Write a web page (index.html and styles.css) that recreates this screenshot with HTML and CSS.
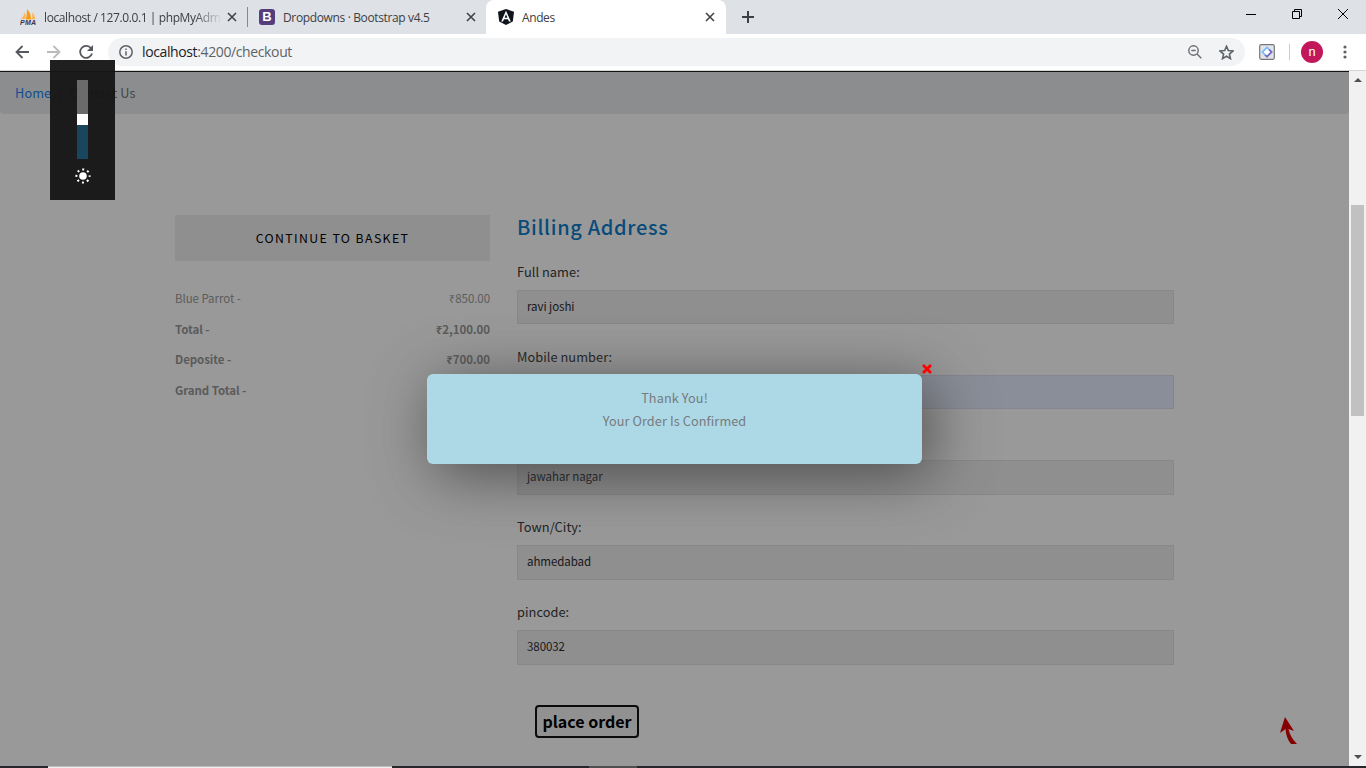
FILE: index.html
```html
<!DOCTYPE html>
<html lang="en">
<head>
<meta charset="utf-8">
<title>Andes</title>
<link rel="stylesheet" href="styles.css">
</head>
<body>
<header class="tabs">
  <div class="tab tab-pma">
    <svg class="favicon" viewBox="0 0 16 16"><path d="M1 10 Q4 7 5 3 Q6 7 5.500 10Z" fill="#fbb45c"/><path d="M6 10.500Q7 5 7 0Q11 4 11 10.500Z" fill="#f89c0e"/><path d="M11.500 10.500Q13 7 12 3Q15 6 15.500 10Z" fill="#fbb45c"/><text x="0" y="16" class="pma" textLength="16">PMA</text></svg>
    <span class="tab-title fade t1">localhost / 127.0.0.1 | phpMyAdm</span>
    <svg class="x" viewBox="0 0 10 10"><path d="M1 1 9 9M9 1 1 9"/></svg>
  </div>
  <div class="tab tab-boot">
    <span class="boot">B</span>
    <span class="tab-title t2">Dropdowns · Bootstrap v4.5</span>
    <svg class="x" viewBox="0 0 10 10"><path d="M1 1 9 9M9 1 1 9"/></svg>
  </div>
  <div class="tab tab-andes">
    <svg class="favicon" viewBox="0 0 16 16"><path d="M8 0 16 2.700 14.800 12.500 8 16 1.200 12.500 0 2.700Z" fill="#10141c"/><path d="M8 1.800 3.200 12.600H5L6 10.200H10L11 12.600H12.800ZM8 5.200 9.400 8.700H6.600Z" fill="#fff" fill-rule="evenodd"/></svg>
    <span class="tab-title t3">Andes</span>
    <svg class="x" viewBox="0 0 10 10"><path d="M1 1 9 9M9 1 1 9"/></svg>
  </div>
  <svg class="plus" viewBox="0 0 12 12"><path d="M6 0V12M0 6H12"/></svg>
  <div class="window-buttons">
    <svg width="10" height="10"><path d="M0 5.500H10"/></svg>
    <svg width="10" height="10"><path d="M.5 2.500H7.500V9.500H.5ZM2.500 2.500V.5H9.500V7.500H7.500"/></svg>
    <svg width="10" height="10"><path d="M0 0 10 10M10 0 0 10"/></svg>
  </div>
</header>
<nav class="toolbar">
  <svg class="nav-icon" viewBox="0 0 14 14"><path d="M14 7H1.500M7.500 1 1.500 7 7.500 13"/></svg>
  <svg class="nav-icon off" viewBox="0 0 14 14"><path d="M0 7H12.500M6.500 1 12.500 7 6.500 13"/></svg>
  <svg class="nav-icon" viewBox="0 0 14 14"><path d="M12 3.300A6 6 0 1 0 13 8.500"/><path d="M14 0V6H8Z" class="solid"/></svg>
  <div class="omnibox">
    <svg class="info" viewBox="0 0 14 14"><circle cx="7" cy="7" r="6.200"/><path d="M7 6.200V10.500M7 3.500V5"/></svg>
    <span class="url"><b>localhost</b>:4200/checkout</span>
    <svg class="search" viewBox="0 0 14 14"><circle cx="5.500" cy="5.500" r="4.700"/><path d="M9 9 13.300 13.300M3.300 5.500H7.700"/></svg>
    <svg class="star" viewBox="0 0 14 14"><path d="M7 1.200 8.700 5.200 13 5.600 9.700 8.500 10.700 12.700 7 10.500 3.300 12.700 4.300 8.500 1 5.600 5.300 5.200Z"/></svg>
  </div>
  <svg class="extension" viewBox="0 0 16 16"><rect x=".7" y=".7" width="14.600" height="14.600" rx="1.500" fill="#e4e4e7" stroke="#77777b" stroke-width="1.200"/><path d="M8 1.800 14.200 8 8 14.200 1.800 8Z" fill="#fff"/><path d="M6 10.800 3.300 8 8 3.300 10 5.300" fill="none" stroke="#7abbfb" stroke-width="1.800"/><path d="M10 5.300 12.700 8 8 12.700 6 10.800" fill="none" stroke="#706bc4" stroke-width="1.800"/></svg>
  <i class="divider"></i>
  <span class="avatar">n</span>
  <svg class="dots" viewBox="0 0 4 14"><circle cx="2" cy="2" r="1.600"/><circle cx="2" cy="7" r="1.600"/><circle cx="2" cy="12" r="1.600"/></svg>
</nav>
<div class="viewport">
  <div class="page">
    <div class="breadcrumb"><a>Home</a><span class="slash">/</span><span class="contact">Contact Us</span></div>
    <main class="checkout">
      <aside class="summary">
        <button class="basket"><span>CONTINUE TO BASKET</span></button>
        <div class="line regular"><span>Blue Parrot -</span><span>₹850.00</span></div>
        <div class="line"><span>Total -</span><span>₹2,100.00</span></div>
        <div class="line"><span>Deposite -</span><span>₹700.00</span></div>
        <div class="line"><span>Grand Total -</span></div>
      </aside>
      <form class="billing">
        <h2><span>Billing Address</span></h2>
        <label>Full name:</label><div class="field">ravi joshi</div>
        <label>Mobile number:</label><div class="field autofill"></div>
        <label></label><div class="field">jawahar nagar</div>
        <label>Town/City:</label><div class="field">ahmedabad</div>
        <label>pincode:</label><div class="field">380032</div>
        <button class="order" type="button"><span>place order</span></button>
      </form>
    </main>
  </div>
  <div class="scrollbar"><i class="up"></i><i class="thumb"></i><i class="down"></i></div>
</div>
<footer class="taskbar"><i class="task-active"></i><i class="task-open"></i></footer>
<section class="modal"><p>Thank You!</p><p>Your Order Is Confirmed</p>
  <svg class="modal-close" viewBox="0 0 10 10"><path d="M1 1 9 9M9 1 1 9"/></svg>
</section>
<div class="brightness">
  <div class="slider"><i></i></div>
  <svg class="sun" viewBox="-8 -8 16 16"><circle r="3.800"/><circle r="6.600" class="rays"/></svg>
</div>
<svg class="to-top" viewBox="0 0 18 28"><path d="M5 0 14 14 8.500 12Q10 20 17 27H11Q6 21 5.500 12L0 16Z"/></svg>
</body>
</html>
```
FILE: styles.css
```css
* { box-sizing: border-box; }
body { margin: 0; width: 1366px; height: 768px; overflow: hidden; position: relative; display: flex; flex-direction: column; background: #999; font-family: "Noto Sans CJK SC", "Noto Sans", sans-serif; }
svg { display: block; flex: none; }
button { font-family: inherit; padding: 0; }
span { white-space: nowrap; }
.tabs { height: 34px; background: #dee1e6; display: flex; flex: none; font: 12px "Open Sans", sans-serif; color: #3c4043; }
.tab { display: flex; align-items: center; height: 34px; }
.tab-pma { width: 248px; padding-left: 20px; border-right: 1px solid #85888d; height: 20px; margin-top: 7px; }
.tab-boot { width: 238px; padding-left: 11px; }
.tab-andes { width: 240px; padding-left: 12px; background: #fff; border-radius: 8px 8px 0 0; }
.favicon, .boot { width: 16px; height: 16px; margin-right: 8px; }
.pma { font: italic bold 7px "Liberation Sans", sans-serif; fill: #34345c; }
.boot { background: #563d7c; color: #fff; border-radius: 3px; font: bold 13px/16px "Liberation Sans", sans-serif; text-align: center; }
.tab-title { flex: none; }
.t1 { width: 176px; letter-spacing: -.4px; }
.t2 { width: 176px; letter-spacing: -.36px; }
.t3 { width: 183px; letter-spacing: -.4px; }
.fade { -webkit-mask-image: linear-gradient(90deg, #000 150px, transparent 178px); mask-image: linear-gradient(90deg, #000 150px, transparent 178px); }
.x { width: 10px; height: 10px; margin-left: 7px; }
.tab-andes .x { margin-left: 0; }
.x path { stroke: #3f4246; stroke-width: 1.6; }
.plus { width: 12px; height: 12px; margin: 11px 0 0 16px; }
.plus path { stroke: #3c4043; stroke-width: 2; }
.window-buttons { display: flex; gap: 36px; margin: 9px 18px 0 auto; }
.window-buttons path { fill: none; stroke: #000; }
.toolbar { height: 37px; flex: none; background: #fff; display: flex; align-items: center; border-bottom: 1px solid #d4d6d7; padding-left: 15px; }
.nav-icon { width: 14px; height: 14px; margin-right: 18px; fill: none; stroke: #55585d; stroke-width: 1.8; }
.off { stroke: #b9bbbd; }
.solid { fill: #55585d; stroke: none; }
.omnibox { width: 1137px; height: 28px; border-radius: 14px; background: #f1f3f4; margin-left: -3px; padding: 0 12px 0 11px; display: flex; align-items: center; color: #5f6368; }
.info { width: 14px; height: 14px; fill: none; stroke: #5f6368; stroke-width: 1.5; margin-right: 9px; }
.url { font: 14px/18px "Open Sans", sans-serif; letter-spacing: -.38px; }
.url b { color: #202124; font-weight: normal; }
.search { width: 14px; height: 14px; margin: 0 17px 0 auto; fill: none; stroke: #6a6d71; stroke-width: 1.4; }
.star { width: 15px; height: 15px; margin-right: -1px; fill: none; stroke: #5f6368; stroke-width: 1.5; }
.extension { width: 16px; height: 16px; margin-left: 14px; }
.divider { width: 1px; height: 16px; background: #c9cbce; margin-left: 14px; }
.avatar { width: 22px; height: 22px; border-radius: 50%; margin-left: 11px; background: #c2185b; color: #fff; font: 13px/21px Roboto, sans-serif; text-align: center; }
.dots { width: 4px; height: 14px; margin-left: 20px; fill: #5f6368; }
.viewport { flex: 1; display: flex; min-height: 0; }
.page { width: 1349px; overflow: hidden; border-top: 1px solid #11140f; }
.breadcrumb { height: 42px; border-radius: 0 0 4px 4px; background: #8c8d8e; padding-left: 15px; font-size: 12.7px; line-height: 42px; letter-spacing: .15px; color: #42464a; display: flex; }
.breadcrumb a { color: #104d94; width: 43px; }
.slash { width: 12px; }
.checkout { padding: 101px 0 0 175px; display: flex; gap: 27px; }
.summary { width: 315px; color: #5b5b5b; }
.basket { display: block; width: 315px; height: 46px; background: #8f8f8f; border: 0; font-size: 12.3px; font-weight: 400; letter-spacing: 1.4px; color: #000; margin-bottom: 22px; }
.line { display: flex; justify-content: space-between; font-size: 11.5px; letter-spacing: -.06px; line-height: 30.6px; font-weight: bold; }
.regular { font-weight: normal; }
.billing { width: 657px; }
h2 { margin: 0; height: 44px; font-size: 20px; font-weight: 500; line-height: 24px; letter-spacing: .67px; color: #084b7a; }
label { display: block; height: 50.7px; padding-top: 20.4px; line-height: 24px; font-size: 12.8px; letter-spacing: .05px; color: #222; }
h2 + label { height: 31px; padding-top: 1px; }
.field { height: 34.4px; background: #8f8f8f; border: 1px solid #888; padding-left: 9px; font-size: 11.5px; letter-spacing: -.06px; line-height: 31px; color: #17171b; }
.autofill { background: #8a8e98; border-color: #83868e; }
.order { display: block; margin: 40px 0 0 18px; width: 104px; height: 33px; border: 2px solid #0b0b0b; border-radius: 4px; background: #919191; font-size: 16px; font-weight: bold; line-height: 28px; color: #000; }
.scrollbar { width: 17px; background: #f1f1f1; display: flex; flex-direction: column; align-items: center; }
.scrollbar .up, .scrollbar .down { border: 4px solid transparent; width: 0; height: 0; }
.up { border-top: 0 !important; border-bottom-color: #505050 !important; margin-top: 7px; }
.down { border-bottom: 0 !important; border-top-color: #505050 !important; margin: auto 0 7px; }
.thumb { width: 13px; height: 211px; background: #c1c1c1; margin-top: 123px; }
.taskbar { height: 2px; flex: none; background: #25272a; display: flex; }
.task-active { width: 344px; margin-left: 48px; background: #eee; border-top: 1px solid #bbb; }
.task-open { width: 48px; margin-left: 197px; background: #4e4f50; }
.modal { position: absolute; left: 427px; top: 374px; width: 495px; height: 90px; padding-top: 12px; border-radius: 6px; background: #add8e6; box-shadow: 8px 10px 60px rgba(60,60,60,.8); color: #777b7e; text-align: center; font-size: 12.7px; }
.modal p { margin: 0; line-height: 23px; letter-spacing: .1px; }
.modal-close { position: absolute; left: 495px; top: -10px; width: 10px; height: 10px; }
.modal-close path { stroke: #f00; stroke-width: 2.8; }
.brightness { position: absolute; left: 50px; top: 60px; width: 65px; height: 140px; background: rgba(22,22,22,.96); display: flex; flex-direction: column; align-items: center; padding-top: 20px; }
.slider { width: 11px; height: 79px; background: linear-gradient(#6b6b6b 34px, #18465f 34px); padding-top: 34px; }
.slider i { display: block; height: 11px; background: #fff; }
.sun { width: 16px; height: 16px; margin-top: 9px; fill: #fff; }
.rays { fill: none; stroke: #fff; stroke-width: 2; stroke-dasharray: 2 3.184; stroke-dashoffset: 1; }
.to-top { position: absolute; left: 1280px; top: 717px; width: 18px; height: 28px; fill: #850000; }
```
